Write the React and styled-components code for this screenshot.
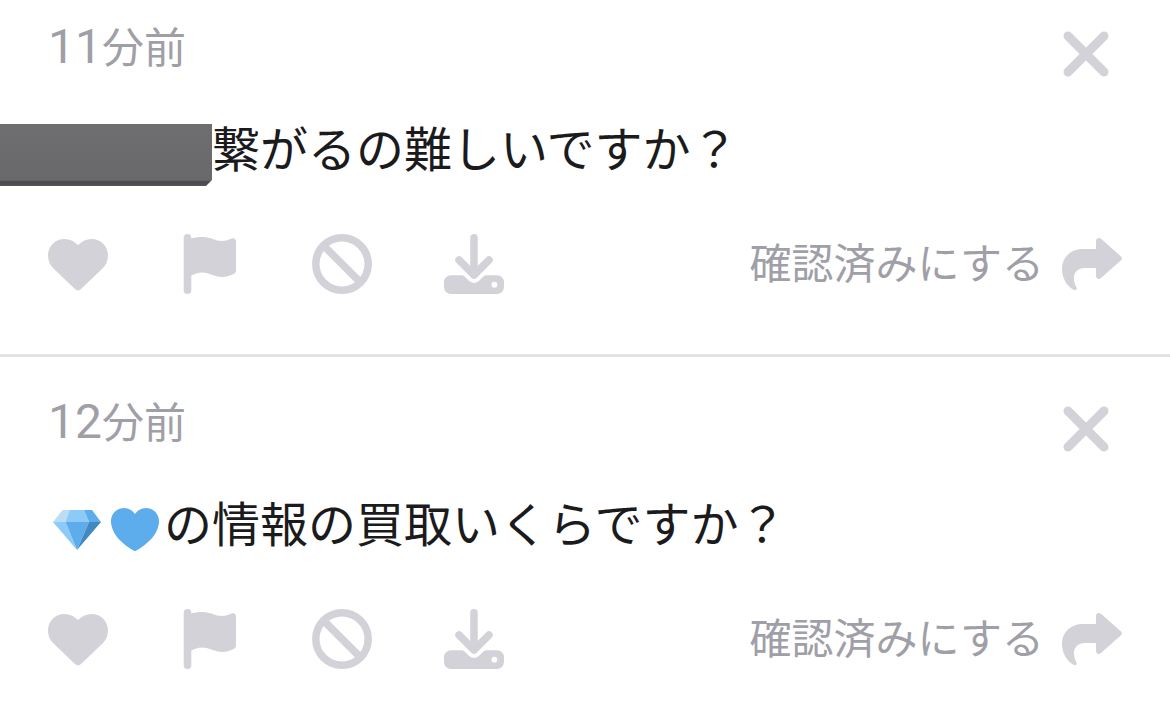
import React from 'react';
import styled, { createGlobalStyle } from 'styled-components';

const GlobalStyle = createGlobalStyle`
  * {
    box-sizing: border-box;
  }

  body {
    margin: 0;
    background: #fff;
    font-family: 'Noto Sans CJK JP', sans-serif;
  }
`;

const List = styled.ul`
  margin: 0;
  padding: 0;
  list-style: none;
`;

const Item = styled.li`
  padding: 42px 48px 60px;
  border-bottom: 3px solid #e3e3e5;

  &:first-child {
    padding-top: 24px;
  }

  &:last-child {
    padding-bottom: 48px;
    border-bottom: 0;
  }
`;

const Header = styled.div`
  display: flex;
  justify-content: space-between;
  align-items: flex-start;
  height: 60px;
  padding-right: 6px;
`;

const Time = styled.time`
  font-size: 42px;
  line-height: 42px;
  color: #a09fa8;
`;

const Digits = styled.span`
  font-family: Roboto, sans-serif;
  font-size: 48px;
  line-height: 1px;
`;

const Message = styled.p`
  display: flex;
  align-items: flex-start;
  height: 72px;
  margin: 30px 0 48px;
  font-size: 48px;
  line-height: 64px;
  color: #1b1b1d;
  white-space: nowrap;
`;

const Redacted = styled.span`
  align-self: flex-end;
  width: 212px;
  height: 62px;
  margin-left: -48px;
  background: linear-gradient(#6e6e70, #69696c 56px, #47464c 58px, #55545b);
  clip-path: polygon(0 0, 100% 0, 100% 56px, 206px 100%, 0 100%);
`;

const Emoji = styled.svg`
  width: 48px;
  height: 48px;
  margin: 17px 5px 0;
`;

const Footer = styled.div`
  display: flex;
  justify-content: space-between;
  align-items: center;
`;

const Actions = styled.div`
  display: flex;
  gap: 72px;
`;

const IconButton = styled.button`
  display: block;
  width: 60px;
  height: 60px;
  padding: 0;
  border: 0;
  background: none;
  color: #d3d2d8;
  cursor: pointer;

  svg {
    display: block;
    width: 60px;
    height: 60px;
  }
`;

const Done = styled.div`
  display: flex;
  align-items: flex-start;
  gap: 18px;
`;

const DoneButton = styled.button`
  padding: 0;
  border: 0;
  background: none;
  font-family: inherit;
  font-size: 42px;
  line-height: 54px;
  color: #a09fa8;
  cursor: pointer;
`;

const CloseIcon = () => (
  <svg viewBox="0 0 60 60" fill="none" stroke="currentColor" strokeWidth="9" strokeLinecap="round">
    <path d="M12 12L48 48M48 12L12 48" />
  </svg>
);

const HeartIcon = () => (
  <svg viewBox="0 0 60 60" fill="currentColor">
    <path d="M30 11C26 7 21.5 5 16.5 5C7 5 0 12.3 0 21.5C0 27 2 31 5.5 34.5L27 55Q30 57.8 33 55L54.5 34.5C58 31 60 27 60 21.5C60 12.3 53 5 43.5 5C38.5 5 34 7 30 11Z" />
  </svg>
);

const FlagIcon = () => (
  <svg viewBox="0 0 60 60" fill="currentColor">
    <rect x="3.7" y="0" width="7.6" height="60" rx="3.8" />
    <path d="M8 5.5C14 3.5 18 3 23 3C31 3 35 7 42 7C46 7 48.5 6 51 4.8C54 3.5 56 5 56 7.5V36C56 38 55.5 39 54 39.8C50.5 41.5 47 43 42 43C34 43 30 38.5 22 38.5C18 38.5 14 40 11.3 41.5H8Z" />
  </svg>
);

const BanIcon = () => (
  <svg viewBox="0 0 60 60" fill="none" stroke="currentColor" strokeWidth="7.5">
    <circle cx="30" cy="30" r="26.2" />
    <path d="M12 12L48 48" />
  </svg>
);

const DownloadIcon = () => (
  <svg viewBox="0 0 60 60" fill="currentColor">
    <path
      d="M30 3.8V41M15 26L30 41L45 26"
      fill="none"
      stroke="currentColor"
      strokeWidth="7.5"
      strokeLinecap="round"
      strokeLinejoin="round"
    />
    <path
      fillRule="evenodd"
      d="M7 41.2H17C18.5 41.2 19.5 41.6 20.5 42.6L25.5 47.2Q30 50.8 34.5 47.2L39.5 42.6C40.5 41.6 41.5 41.2 43 41.2H53A7 7 0 0 1 60 48.2V53A7 7 0 0 1 53 60H7A7 7 0 0 1 0 53V48.2A7 7 0 0 1 7 41.2ZM50.4 47.8A2.9 2.9 0 1 0 50.4 53.6A2.9 2.9 0 1 0 50.4 47.8Z"
    />
  </svg>
);

const ReplyIcon = () => (
  <svg viewBox="0 0 60 60" fill="currentColor">
    <path d="M34 15V7C34 4.2 37 3 39.3 5L59 22.5Q61 24.3 59 26.2L39.3 43.7C37.2 45.8 34 45 34 42V34H23C15 34 11 40 12 46C12.5 49.5 13.5 51.5 14.5 53.5C15.5 55.5 13.5 57 11.5 55.8C4 51.5 0 43 0 35C0 23 9 15 21 15Z" />
  </svg>
);

const Gem = () => (
  <Emoji viewBox="0 0 48 48" role="img" aria-label="ダイヤ">
    <path fill="#bdddf4" d="M9.5 4H18L12.5 16H0Z" />
    <path fill="#8ccaf7" d="M17 4H31L36 16H12.5Z" />
    <path fill="#5dadec" d="M31 4H39L48 16H36Z" />
    <path fill="#8ccaf7" d="M0 16H12.5L24 44Z" />
    <path fill="#5dadec" d="M12.5 16H36L24 44Z" />
    <path fill="#4289c1" d="M36 16H48L24 44Z" />
  </Emoji>
);

const BlueHeart = () => (
  <Emoji viewBox="0 0 48 48" role="img" aria-label="青いハート">
    <path
      fill="#5dadec"
      d="M24 8C21.5 4.5 17.5 2 13 2C5.8 2 0 7.8 0 15C0 28 12 39 24 45.2C36 39 48 28 48 15C48 7.8 42.2 2 35 2C30.5 2 26.5 4.5 24 8Z"
    />
  </Emoji>
);

function QuestionItem({ minutes, children }) {
  return (
    <Item>
      <Header>
        <Time>
          <Digits>{minutes}</Digits>分前
        </Time>
        <IconButton aria-label="削除">
          <CloseIcon />
        </IconButton>
      </Header>
      <Message>{children}</Message>
      <Footer>
        <Actions>
          <IconButton aria-label="いいね">
            <HeartIcon />
          </IconButton>
          <IconButton aria-label="通報">
            <FlagIcon />
          </IconButton>
          <IconButton aria-label="ブロック">
            <BanIcon />
          </IconButton>
          <IconButton aria-label="保存">
            <DownloadIcon />
          </IconButton>
        </Actions>
        <Done>
          <DoneButton>確認済みにする</DoneButton>
          <IconButton aria-label="返信">
            <ReplyIcon />
          </IconButton>
        </Done>
      </Footer>
    </Item>
  );
}

function App() {
  return (
    <>
      <GlobalStyle />
      <List>
        <QuestionItem minutes={11}>
          <Redacted />
          繋がるの難しいですか？
        </QuestionItem>
        <QuestionItem minutes={12}>
          <Gem />
          <BlueHeart />
          の情報の買取いくらですか？
        </QuestionItem>
      </List>
    </>
  );
}

export default App;
